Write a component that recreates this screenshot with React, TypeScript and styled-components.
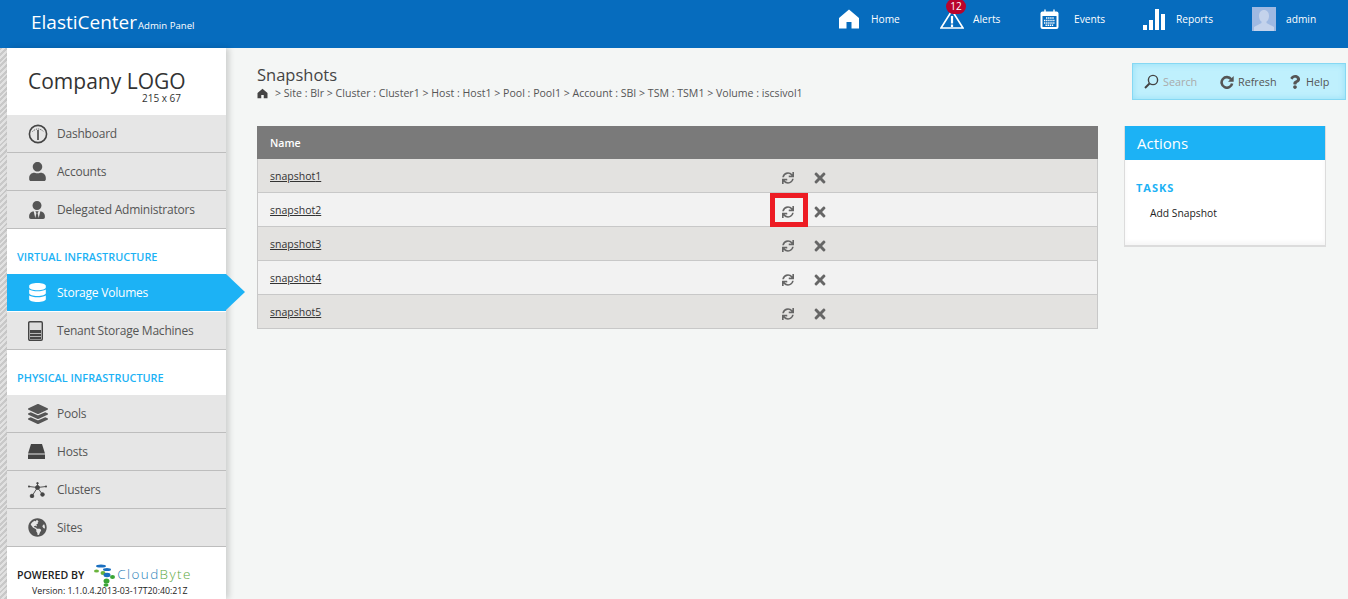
import React from "react";
import styled, { createGlobalStyle } from "styled-components";
import { FaSync, FaTimes, FaUser, FaDatabase, FaQuestion, FaUserTie, FaLayerGroup, FaGlobeAmericas } from "react-icons/fa";

const Global = createGlobalStyle`
  html, body { margin: 0; padding: 0; height: 599px; overflow: hidden; background: #f4f6f5; }
  body { font-family: "Open Sans", "Noto Sans", sans-serif; color: #444; }
  * { box-sizing: border-box; }
`;

const Page = styled.div`
  width: 1348px;
  height: 599px;
  display: flex;
  flex-direction: column;
  overflow: hidden;
`;

const TopBar = styled.header`
  height: 48px;
  flex: none;
  background: #066cbe;
  display: flex;
  color: #fff;
`;

const Brand = styled.div`
  width: 800px;
  padding: 9px 0 0 31px;
  display: flex;
  align-items: baseline;
`;

const BrandName = styled.span`
  font-size: 19px;
  line-height: 26px;
`;

const BrandSub = styled.span`
  font-size: 9.6px;
  margin-left: 1px;
`;

const TopNav = styled.nav`
  display: flex;
  align-items: flex-start;
  padding-left: 38px;
`;

const TopItem = styled.div<{ $w: number }>`
  width: ${(p) => p.$w}px;
  height: 38px;
  display: flex;
  align-items: center;
  font-size: 10.2px;
  position: relative;
`;

const TopIcon = styled.span<{ $w: number }>`
  width: ${(p) => p.$w}px;
  flex: none;
  display: flex;
`;

const Badge = styled.span`
  position: absolute;
  left: 6px;
  top: -1px;
  width: 20px;
  height: 15px;
  border-radius: 8px;
  background: #b9042c;
  font-size: 10px;
  line-height: 14px;
  text-align: center;
`;

const Avatar = styled.span`
  width: 24px;
  height: 24px;
  background: #9fb9e2;
  margin: 0 10px 0 0;
  display: flex;
  overflow: hidden;
`;

const Body = styled.div`
  flex: 1;
  display: flex;
  min-height: 0;
`;

const Stripe = styled.div`
  width: 7px;
  flex: none;
  background: repeating-linear-gradient(135deg, #c9c9c9 0 2px, #e2e2e2 2px 4px);
`;

const Sidebar = styled.aside`
  width: 219px;
  flex: none;
  background: #fff;
  position: relative;
  box-shadow: 3px 0 6px rgba(0, 0, 0, 0.16);
  display: flex;
  flex-direction: column;
  z-index: 1;
`;

const Logo = styled.div`
  height: 67px;
  padding: 21px 0 0 21px;
  color: #333;
  position: relative;
`;

const LogoText = styled.div`
  font-size: 21px;
  line-height: 24px;
`;

const LogoSize = styled.div`
  position: absolute;
  left: 135px;
  top: 44px;
  font-size: 10px;
  line-height: 12px;
`;

const NavItem = styled.div<{ $active?: boolean }>`
  height: ${(p) => (p.$active ? "37px" : "38px")};
  display: flex;
  align-items: center;
  position: relative;
  background: ${(p) => (p.$active ? "#1cb2f5" : "#e6e6e6")};
  color: ${(p) => (p.$active ? "#fff" : "#555")};
  border-bottom: ${(p) => (p.$active ? "0" : "1px solid #bdbdbd")};
  font-size: 12px;
  letter-spacing: -0.22px;
  ${(p) =>
    p.$active &&
    `margin-bottom: 1px;
     &::after {
       content: "";
       position: absolute;
       left: 219px;
       top: 0;
       border-left: 19px solid #1cb2f5;
       border-top: 18.5px solid transparent;
       border-bottom: 18.5px solid transparent;
     }`}
`;

const NavIcon = styled.span`
  width: 50px;
  padding-left: 21px;
  flex: none;
  display: flex;
  align-items: center;
  font-size: 18px;
`;

const SectionLabel = styled.div`
  height: 45px;
  padding: 21px 0 0 10px;
  font-size: 10.9px;
  line-height: 14px;
  font-weight: 600;
  color: #1cb2f5;
`;

const Footer = styled.div`
  padding: 16px 0 0 10px;
  color: #222;
`;

const PoweredRow = styled.div`
  display: flex;
  align-items: center;
  height: 24px;
  font-size: 10.6px;
  font-weight: 600;
`;

const CloudLogo = styled.span`
  display: flex;
  align-items: center;
  margin-left: 10px;
`;

const CloudText = styled.span`
  font-size: 13.5px;
  font-weight: 300;
  color: #2a7fb8;
  letter-spacing: 1.4px;
  margin: -3px 0 0 -1px;
`;

const CloudAccent = styled.span`
  color: #5aa83c;
`;

const Version = styled.div`
  font-size: 8.8px;
  line-height: 10px;
  padding-left: 15px;
  margin-top: -1px;
`;

const Main = styled.main`
  flex: 1;
  padding: 17px 0 0 31px;
  display: flex;
  min-width: 0;
`;

const Content = styled.div`
  width: 841px;
  flex: none;
`;

const Title = styled.h1`
  margin: 0;
  font-size: 16.5px;
  line-height: 20px;
  font-weight: 400;
  color: #444;
`;

const Crumbs = styled.div`
  display: flex;
  align-items: center;
  gap: 7px;
  font-size: 10.58px;
  line-height: 16px;
  color: #555;
  margin-bottom: 25px;
`;

const Table = styled.div`
  border: 1px solid #c8c8c8;
  border-top: 0;
`;

const HeadRow = styled.div`
  height: 33px;
  margin: 0 -1px;
  background: #7a7a7a;
  color: #fff;
  font-size: 10.6px;
  font-weight: 600;
  padding-left: 13px;
  display: flex;
  align-items: center;
`;

const Row = styled.div<{ $odd: boolean }>`
  height: 34px;
  display: grid;
  grid-template-columns: 514px 32px 32px;
  align-items: stretch;
  background: ${(p) => (p.$odd ? "#e3e2e0" : "#f2f2f2")};
  border-bottom: 1px solid #c8c8c8;
  &:last-child { height: 33px; border-bottom: 0; }
`;

const NameLink = styled.a`
  align-self: start;
  padding: 10px 0 0 12px;
  font-size: 10.5px;
  line-height: 14px;
  color: #333;
  text-decoration: underline;
`;

const IconCell = styled.span<{ $size: number }>`
  position: relative;
  display: flex;
  justify-content: center;
  align-items: flex-start;
  color: #666;
  font-size: ${(p) => p.$size}px;
  padding-top: ${(p) => (p.$size > 12 ? 11 : 13)}px;
`;

const Highlight = styled.span`
  position: absolute;
  left: -2px;
  top: 0;
  width: 38px;
  height: 34px;
  border: 5px solid #ed1c24;
`;

const Side = styled.div`
  flex: 1;
  position: relative;
  padding: 0 0 0 27px;
`;

const Toolbar = styled.div`
  position: absolute;
  top: -2px;
  right: 2px;
  width: 214px;
  height: 37px;
  display: flex;
  align-items: center;
  padding-left: 11px;
  background: #bff0fd;
  border: 1px solid #86d8f3;
  box-shadow: inset 0 0 6px rgba(90, 200, 240, 0.45);
  font-size: 10.8px;
  color: #555;
`;

const ToolItem = styled.span<{ $w: number; $muted?: boolean }>`
  width: ${(p) => p.$w}px;
  display: flex;
  align-items: center;
  gap: 4px;
  color: ${(p) => (p.$muted ? "#aaa" : "#555")};
  white-space: nowrap;
`;

const ToolIcon = styled.span`
  display: flex;
  color: #555;
  font-size: 14px;
`;

const ActionsCard = styled.section`
  width: 202px;
  height: 121px;
  margin: 61px 0 0 -1px;
  background: #fff;
  border: 1px solid #dcdcdc;
  border-width: 0 1px 2px 1px;
  box-shadow: inset 0 -3px 4px rgba(0, 0, 0, 0.04);
`;

const ActionsHead = styled.div`
  height: 34px;
  padding-left: 12px;
  background: #1cb2f5;
  color: #fff;
  font-size: 15px;
  line-height: 34px;
`;

const TasksLabel = styled.div`
  margin: 21px 0 0 11px;
  font-size: 11px;
  line-height: 14px;
  font-weight: 700;
  letter-spacing: 1px;
  color: #1cb2f5;
`;

const TaskLink = styled.div`
  margin: 11px 0 0 25px;
  font-size: 10.3px;
  line-height: 14px;
  color: #222;
`;

const HomeGlyph = ({ size = 22, color = "#fff" }: { size?: number; color?: string }) => (
  <svg width={size} height={size} viewBox="0 0 22 22" fill={color}>
    <path d="M11 1.5 1 10v10.5h7.5V14h5v6.5H21V10z" />
  </svg>
);

const Gauge = () => (
  <svg width="20" height="20" viewBox="0 0 20 20" fill="none" stroke="#444">
    <circle cx="10" cy="10" r="8.6" strokeWidth="1.6" />
    <path d="M10 16V6" strokeWidth="1.6" />
    <path d="M4.5 7.5Q10 2.5 15.5 7.5" strokeWidth="1" strokeDasharray="1 1" />
  </svg>
);

const Machine = () => (
  <svg width="15" height="20" viewBox="0 0 15 20">
    <rect x="0.7" y="0.7" width="13.600" height="18.600" rx="1.200" fill="#dcdcdc" stroke="#444" strokeWidth="1.400" />
    <path d="M2 9h11v3H2zM2 12.800h11v2.400H2zM2 16h11v2H2z" fill="#444" />
  </svg>
);

const HostGlyph = () => (
  <svg width="17" height="15" viewBox="0 0 17 15" fill="#444">
    <path d="M3 0h11l3 9.500H0z" />
    <rect x="0" y="10.500" width="17" height="4.500" />
  </svg>
);

const ClusterGlyph = () => (
  <svg width="19" height="16" viewBox="0 0 19 16" stroke="#444" fill="#444" strokeWidth="0.9">
    <path d="M9.500 5.500 4 14M9.500 5.500 14.500 12.500M9.500 5.500V1M9.500 5.500 1 4.500M9.500 5.500 18 4.500" />
    <circle cx="9.500" cy="5.500" r="2" />
    <circle cx="4" cy="14" r="1.800" />
    <circle cx="14.500" cy="12.500" r="1.800" />
    <circle cx="9.500" cy="1.200" r="0.800" />
    <circle cx="1" cy="4.500" r="0.700" />
    <circle cx="18" cy="4.500" r="0.700" />
  </svg>
);

const AlertGlyph = () => (
  <svg width="24" height="20" viewBox="0 0 24 20" fill="none" stroke="#fff" strokeWidth="1.600">
    <path d="M12 1.500 1 19h22z" />
    <path d="M12 7v7.500M12 15.500v2.500" strokeWidth="2.200" />
  </svg>
);

const CalendarGlyph = () => (
  <svg width="19" height="21" viewBox="0 0 19 21">
    <rect x="0.500" y="2.500" width="18" height="17.500" rx="2" fill="#fff" />
    <rect x="2.500" y="7" width="14" height="11" fill="#066cbe" />
    <path d="M5 0.500v4M14 0.500v4" stroke="#fff" strokeWidth="1.400" />
    <path d="M6 9h8M4 11.500h11M4 14h11M5.500 16.200h8" stroke="#fff" strokeWidth="1.400" strokeDasharray="1.400 0.700" />
  </svg>
);

const BarsGlyph = () => (
  <svg width="22" height="21" viewBox="0 0 22 21" fill="#fff">
    <rect x="0" y="16" width="4" height="5" />
    <rect x="6" y="11" width="4" height="10" />
    <rect x="12" y="0" width="4" height="21" />
    <rect x="18" y="5" width="4" height="16" />
  </svg>
);

const AvatarGlyph = () => (
  <svg width="24" height="24" viewBox="0 0 24 24" fill="#c4d3ec">
    <path d="M12 3c3 0 5 2.400 5 6 0 2.600-1 4.600-2.500 5.600V16l7.500 4v4H2v-4l7.500-4v-1.400C8 13.600 7 11.600 7 9c0-3.600 2-6 5-6z" />
  </svg>
);

const SearchGlyph = () => (
  <svg width="15" height="15" viewBox="0 0 15 15" fill="none" stroke="#444">
    <circle cx="9" cy="6" r="4.600" strokeWidth="1.400" />
    <path d="M5.500 9.500 1 14" strokeWidth="2" />
  </svg>
);

const RefreshGlyph = () => (
  <svg width="14" height="14" viewBox="0 0 14 14">
    <path d="M11.200 4.300A5.300 5.300 0 1 0 12.100 8.500" fill="none" stroke="#555" strokeWidth="2.600" />
    <path d="M13.700 1v5.800H8z" fill="#555" />
  </svg>
);

const CloudDots = () => (
  <svg width="24" height="24" viewBox="0 0 24 24">
    <ellipse cx="7" cy="3" rx="5" ry="1.600" fill="#1a6fc0" />
    <ellipse cx="13" cy="6.500" rx="4" ry="1.500" fill="#1a6fc0" />
    <ellipse cx="2.500" cy="8" rx="2.500" ry="1.600" fill="#6ab43c" />
    <ellipse cx="9" cy="10" rx="2.500" ry="2" fill="#6ab43c" />
    <ellipse cx="13" cy="12" rx="3.500" ry="2.200" fill="#1a6fc0" />
    <ellipse cx="18.500" cy="14" rx="2.500" ry="2" fill="#3aa535" />
    <ellipse cx="12.500" cy="18" rx="3" ry="2.500" fill="#3aa535" />
    <ellipse cx="12" cy="22" rx="2.500" ry="1.800" fill="#3aa535" />
  </svg>
);

const crumbs = "> Site : Blr > Cluster : Cluster1 > Host : Host1 > Pool : Pool1 > Account : SBI > TSM : TSM1 > Volume : iscsivol1";

type NavEntry = { label: string; icon: React.ReactNode; active?: boolean };

const nav1: NavEntry[] = [
  { label: "Dashboard", icon: <Gauge /> },
  { label: "Accounts", icon: <FaUser size={19} /> },
  { label: "Delegated Administrators", icon: <FaUserTie /> },
];
const nav2: NavEntry[] = [
  { label: "Storage Volumes", icon: <FaDatabase size={19} />, active: true },
  { label: "Tenant Storage Machines", icon: <Machine /> },
];
const nav3: NavEntry[] = [
  { label: "Pools", icon: <FaLayerGroup size={20} /> },
  { label: "Hosts", icon: <HostGlyph /> },
  { label: "Clusters", icon: <ClusterGlyph /> },
  { label: "Sites", icon: <FaGlobeAmericas size={19} /> },
];

const NavGroup = ({ items }: { items: NavEntry[] }) => (
  <>
    {items.map((it) => (
      <NavItem key={it.label} $active={it.active}>
        <NavIcon>{it.icon}</NavIcon>
        {it.label}
      </NavItem>
    ))}
  </>
);

export default function App() {
  return (
    <Page>
      <Global />
      <TopBar>
        <Brand>
          <BrandName>ElastiCenter</BrandName>
          <BrandSub>Admin Panel</BrandSub>
        </Brand>
        <TopNav>
          <TopItem $w={102}><TopIcon $w={33}><HomeGlyph /></TopIcon>Home</TopItem>
          <TopItem $w={100}><TopIcon $w={33}><AlertGlyph /></TopIcon><Badge>12</Badge>Alerts</TopItem>
          <TopItem $w={103}><TopIcon $w={34}><CalendarGlyph /></TopIcon>Events</TopItem>
          <TopItem $w={109}><TopIcon $w={33}><BarsGlyph /></TopIcon>Reports</TopItem>
          <TopItem $w={80}><Avatar><AvatarGlyph /></Avatar>admin</TopItem>
        </TopNav>
      </TopBar>
      <Body>
        <Stripe />
        <Sidebar>
          <Logo>
            <LogoText>Company LOGO</LogoText>
            <LogoSize>215 x 67</LogoSize>
          </Logo>
          <NavGroup items={nav1} />
          <SectionLabel>VIRTUAL INFRASTRUCTURE</SectionLabel>
          <NavGroup items={nav2} />
          <SectionLabel>PHYSICAL INFRASTRUCTURE</SectionLabel>
          <NavGroup items={nav3} />
          <Footer>
            <PoweredRow>
              POWERED BY
              <CloudLogo>
                <CloudDots />
                <CloudText>Cloud<CloudAccent>Byte</CloudAccent></CloudText>
              </CloudLogo>
            </PoweredRow>
            <Version>Version: 1.1.0.4.2013-03-17T20:40:21Z</Version>
          </Footer>
        </Sidebar>
        <Main>
          <Content>
            <Title>Snapshots</Title>
            <Crumbs>
              <HomeGlyph size={11} color="#444" />
              <span>{crumbs}</span>
            </Crumbs>
            <Table>
              <HeadRow>Name</HeadRow>
              {[1, 2, 3, 4, 5].map((n) => (
                <Row key={n} $odd={n % 2 === 1}>
                  <NameLink>snapshot{n}</NameLink>
                  <IconCell $size={12}>
                    <FaSync />
                    {n === 2 && <Highlight />}
                  </IconCell>
                  <IconCell $size={16}><FaTimes /></IconCell>
                </Row>
              ))}
            </Table>
          </Content>
          <Side>
            <Toolbar>
              <ToolItem $w={76} $muted><ToolIcon><SearchGlyph /></ToolIcon>Search</ToolItem>
              <ToolItem $w={68}><ToolIcon><RefreshGlyph /></ToolIcon>Refresh</ToolItem>
              <ToolItem $w={50}><ToolIcon><FaQuestion /></ToolIcon>Help</ToolItem>
            </Toolbar>
            <ActionsCard>
              <ActionsHead>Actions</ActionsHead>
              <TasksLabel>TASKS</TasksLabel>
              <TaskLink>Add Snapshot</TaskLink>
            </ActionsCard>
          </Side>
        </Main>
      </Body>
    </Page>
  );
}
